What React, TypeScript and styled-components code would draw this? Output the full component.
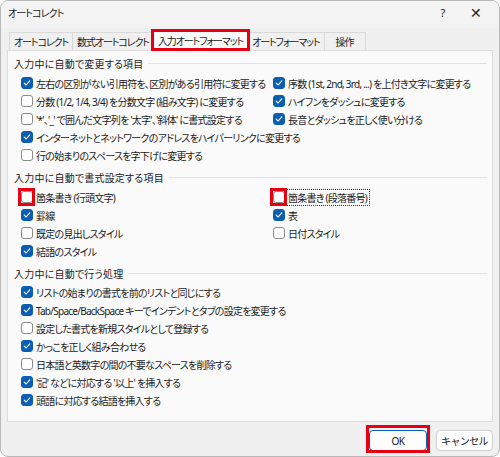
import React from 'react';
import styled, { createGlobalStyle, css } from 'styled-components';

const GlobalStyle = createGlobalStyle`
  html, body {
    margin: 0;
    padding: 0;
    background: #ffffff;
  }
  body {
    font-family: 'Noto Sans', 'Noto Sans CJK JP', sans-serif;
    font-feature-settings: 'palt';
    color: #1a1a1a;
  }
`;

const redMark = css`
  &::after {
    content: '';
    position: absolute;
    border: 3px solid #e60012;
    pointer-events: none;
  }
`;

const Window = styled.div`
  width: 500px;
  height: 457px;
  box-sizing: border-box;
  border: 1px solid #b8b8b8;
  border-radius: 8px;
  background: #f0f0f0;
  overflow: hidden;
  display: flex;
  flex-direction: column;
`;

const TitleBar = styled.div`
  height: 27px;
  flex-shrink: 0;
  box-sizing: border-box;
  display: flex;
  align-items: center;
  padding: 0 12px 5px 7px;
  font-size: 10px;
  letter-spacing: -0.9px;
  background: #f3f3f3;
`;

const Title = styled.span`
  flex: 1;
`;

const TitleButton = styled.span<{ $wide?: boolean }>`
  width: ${(p) => (p.$wide ? '22px' : '28px')};
  text-align: center;
  font-size: ${(p) => (p.$wide ? '14px' : '11px')};
  letter-spacing: 0;
  color: #222;
  margin-left: 8px;
`;

const TabRow = styled.div`
  height: 22px;
  flex-shrink: 0;
  display: flex;
  align-items: flex-end;
  padding-left: 8px;
`;

const Tab = styled.div<{ $active?: boolean; $marked?: boolean }>`
  position: relative;
  box-sizing: border-box;
  min-width: 42px;
  height: ${(p) => (p.$active ? '21px' : '18px')};
  padding: 0 4px;
  display: flex;
  align-items: center;
  justify-content: center;
  font-size: 10px;
  letter-spacing: -1.1px;
  border: 1px solid #d9d9d9;
  border-bottom: ${(p) => (p.$active ? '1px solid #fafafa' : 'none')};
  margin-right: -1px;
  margin-bottom: ${(p) => (p.$active ? '-1px' : '0')};
  background: ${(p) => (p.$active ? '#fafafa' : '#f0f0f0')};
  z-index: ${(p) => (p.$active ? 1 : 0)};
  ${(p) =>
    p.$marked &&
    css`
      ${redMark}
      &::after {
        top: -2px;
        left: -3px;
        right: -3px;
        bottom: -1px;
      }
    `}
`;

const Panel = styled.div`
  height: 372px;
  flex-shrink: 0;
  box-sizing: border-box;
  margin: 0 6px 0 6px;
  background: #fafafa;
  border: 1px solid #dcdcdc;
  padding: 3px 5px 0 6px;
`;

const Section = styled.div<{ $space?: number }>`
  margin-top: ${(p) => p.$space ?? 0}px;
`;

const Heading = styled.div<{ $gap?: number }>`
  height: 18px;
  display: flex;
  align-items: center;
  font-size: 10px;
  letter-spacing: 0.2px;
  margin-bottom: ${(p) => p.$gap ?? 2}px;

  &::after {
    content: '';
    flex: 1;
    margin-left: 5px;
    border-top: 1px solid #e2e2e2;
  }
`;

const Columns = styled.div`
  display: grid;
  grid-template-columns: 252px 1fr;
  padding-left: 7px;
`;

const Column = styled.div`
  display: flex;
  flex-direction: column;
`;

const Row = styled.div`
  height: 18px;
  display: flex;
  align-items: center;
  gap: 3px;
  font-size: 10px;
  letter-spacing: -0.75px;
  white-space: nowrap;
`;

const Box = styled.span<{ $checked: boolean; $marked?: boolean }>`
  position: relative;
  width: 12px;
  height: 12px;
  box-sizing: border-box;
  flex-shrink: 0;
  border-radius: 3px;
  border: 1px solid ${(p) => (p.$checked ? '#0a5fb4' : '#8b8b8b')};
  background: ${(p) => (p.$checked ? '#0a5fb4' : '#ffffff')};
  display: flex;
  align-items: center;
  justify-content: center;
  ${(p) =>
    p.$marked &&
    css`
      ${redMark}
      &::after {
        top: -4px;
        left: -4px;
        right: -3px;
        bottom: -4px;
      }
    `}
`;

const Label = styled.span<{ $focus?: boolean }>`
  ${(p) =>
    p.$focus &&
    css`
      outline: 1px dotted #333;
      outline-offset: 0px;
      padding: 0 2px 0 1px;
      margin-left: -1px;
    `}
`;

const Footer = styled.div`
  flex: 1;
  display: flex;
  justify-content: flex-end;
  align-items: flex-start;
  padding: 8px 6px 0 0;
  gap: 9px;
`;

const Button = styled.button<{ $primary?: boolean }>`
  position: relative;
  width: ${(p) => (p.$primary ? '58px' : '57px')};
  height: 21px;
  box-sizing: border-box;
  border-radius: 4px;
  border: 1px solid ${(p) => (p.$primary ? '#0a5fb4' : '#d0d0d0')};
  background: #fdfdfd;
  font-family: inherit;
  font-size: 10px;
  letter-spacing: -0.6px;
  color: #1a1a1a;
  padding: 0;
  ${(p) =>
    p.$primary &&
    css`
      ${redMark}
      &::after {
        top: -6px;
        left: -4px;
        right: -4px;
        bottom: -3px;
      }
    `}
`;

const Check = () => (
  <svg width="8" height="8" viewBox="0 0 8 8">
    <path d="M1.2 4.2 L3.1 6 L6.8 1.8" fill="none" stroke="#fff" strokeWidth="1.1" strokeLinecap="round" strokeLinejoin="round" />
  </svg>
);

interface ItemProps {
  label: string;
  checked: boolean;
  marked?: boolean;
  focus?: boolean;
}

const Item = ({ label, checked, marked, focus }: ItemProps) => (
  <Row>
    <Box $checked={checked} $marked={marked}>
      {checked && <Check />}
    </Box>
    <Label $focus={focus}>{label}</Label>
  </Row>
);

const replaceLeft: ItemProps[] = [
  { label: '左右の区別がない引用符を、区別がある引用符に変更する', checked: true },
  { label: '分数 (1/2, 1/4, 3/4) を分数文字 (組み文字) に変更する', checked: false },
  { label: "'*'、'_' で囲んだ文字列を '太字'、'斜体' に書式設定する", checked: false },
  { label: 'インターネットとネットワークのアドレスをハイパーリンクに変更する', checked: true },
  { label: '行の始まりのスペースを字下げに変更する', checked: false },
];

const replaceRight: ItemProps[] = [
  { label: '序数 (1st, 2nd, 3rd, ...) を上付き文字に変更する', checked: true },
  { label: 'ハイフンをダッシュに変更する', checked: true },
  { label: '長音とダッシュを正しく使い分ける', checked: true },
];

const formatLeft: ItemProps[] = [
  { label: '箇条書き (行頭文字)', checked: false, marked: true },
  { label: '罫線', checked: true },
  { label: '既定の見出しスタイル', checked: false },
  { label: '結語のスタイル', checked: true },
];

const formatRight: ItemProps[] = [
  { label: '箇条書き (段落番号)', checked: false, marked: true, focus: true },
  { label: '表', checked: true },
  { label: '日付スタイル', checked: false },
];

const actions: ItemProps[] = [
  { label: 'リストの始まりの書式を前のリストと同じにする', checked: true },
  { label: 'Tab/Space/BackSpace キーでインデントとタブの設定を変更する', checked: true },
  { label: '設定した書式を新規スタイルとして登録する', checked: false },
  { label: 'かっこを正しく組み合わせる', checked: true },
  { label: '日本語と英数字の間の不要なスペースを削除する', checked: false },
  { label: "'記' などに対応する '以上' を挿入する", checked: true },
  { label: '頭語に対応する結語を挿入する', checked: true },
];

const renderItems = (items: ItemProps[]) => items.map((item) => <Item key={item.label} {...item} />);

export default function App() {
  return (
    <>
      <GlobalStyle />
      <Window>
        <TitleBar>
          <Title>オートコレクト</Title>
          <TitleButton>?</TitleButton>
          <TitleButton $wide>✕</TitleButton>
        </TitleBar>
        <TabRow>
          <Tab>オートコレクト</Tab>
          <Tab>数式オートコレクト</Tab>
          <Tab $active $marked>
            入力オートフォーマット
          </Tab>
          <Tab>オートフォーマット</Tab>
          <Tab>操作</Tab>
        </TabRow>
        <Panel>
          <Section>
            <Heading>入力中に自動で変更する項目</Heading>
            <Columns>
              <Column>{renderItems(replaceLeft)}</Column>
              <Column>{renderItems(replaceRight)}</Column>
            </Columns>
          </Section>
          <Section $space={4}>
            <Heading>入力中に自動で書式設定する項目</Heading>
            <Columns>
              <Column>{renderItems(formatLeft)}</Column>
              <Column>{renderItems(formatRight)}</Column>
            </Columns>
          </Section>
          <Section $space={4}>
            <Heading $gap={1}>入力中に自動で行う処理</Heading>
            <Columns>
              <Column>{renderItems(actions)}</Column>
            </Columns>
          </Section>
        </Panel>
        <Footer>
          <Button $primary>OK</Button>
          <Button>キャンセル</Button>
        </Footer>
      </Window>
    </>
  );
}
